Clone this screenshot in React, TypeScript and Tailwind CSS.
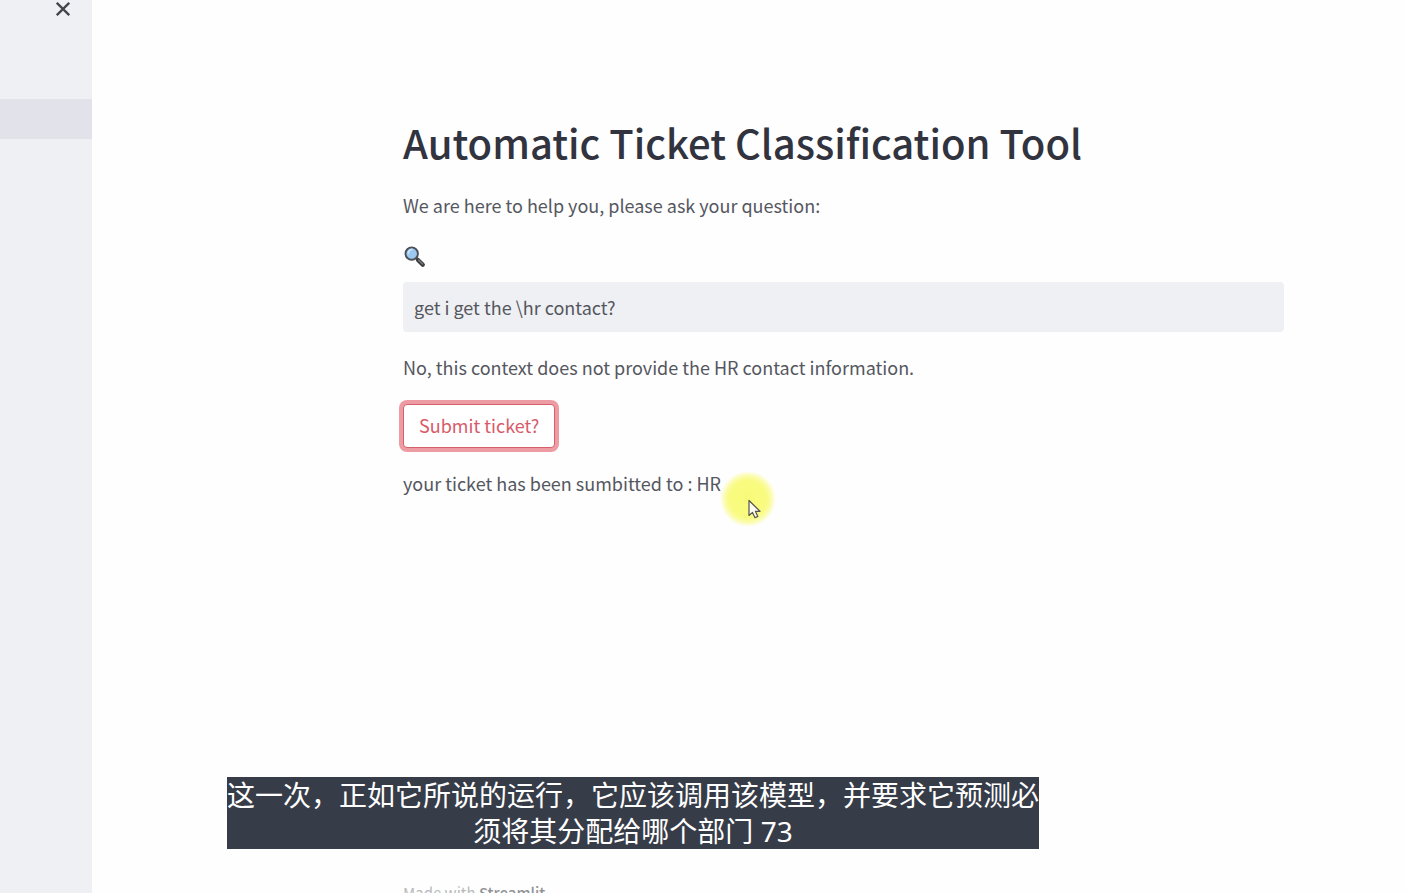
import { useState } from "react";

function MagnifierIcon() {
  return (
    <svg viewBox="0 0 24 24" className="size-6" aria-hidden="true">
      <path d="M13 13.7l2.4 2.4" stroke="#55585c" strokeWidth="2.4" />
      <path d="M15 15.9l4.8 4.8" stroke="#3a3c3e" strokeWidth="4.2" strokeLinecap="round" />
      <path d="M15.6 15.9l4 4" stroke="#7a7c7f" strokeWidth="1.4" strokeLinecap="round" />
      <circle cx="8.7" cy="9.6" r="6.2" fill="#9dc9f0" stroke="#4b5056" strokeWidth="1.9" />
      <path d="M5.4 9.3a3.8 3.8 0 0 1 3.4-3.7" fill="none" stroke="#cfe6fa" strokeWidth="1.5" strokeLinecap="round" />
    </svg>
  );
}

function CloseIcon() {
  return (
    <svg viewBox="0 0 14 14" className="size-3.5" aria-hidden="true">
      <path d="M0.8 0.8l12.4 12.4M13.2 0.8L0.8 13.2" stroke="#43454d" strokeWidth="2.3" />
    </svg>
  );
}

function Pointer() {
  return (
    <div className="pointer-events-none absolute left-[720px] top-[471px] size-14" aria-hidden="true">
      <div className="size-full rounded-full bg-[radial-gradient(closest-side,#f8fb78_0%,#f8fb80_66%,#fbfca8_82%,transparent_100%)]" />
      <svg viewBox="0 0 14 20" className="absolute left-7 top-7 h-5 w-3.5">
        <path
          d="M1 1.5V16.5L4.5 13.4L7 18.7L9.8 17.4L7.4 12.3H12Z"
          fill="#fbfbf4"
          stroke="#55554c"
          strokeWidth="1.2"
          strokeLinejoin="round"
        />
      </svg>
    </div>
  );
}

export default function App() {
  const [question, setQuestion] = useState("get i get the \\hr contact?");

  return (
    <div className="relative flex h-screen overflow-hidden bg-[#fefefe] font-['Noto_Sans_CJK_SC',sans-serif] text-[18px] leading-7 text-[#55575e]">
      <aside className="w-[92px] shrink-0 bg-[#eff0f4]">
        <div className="flex h-[99px] items-start justify-end pr-[22px] pt-0.5">
          <button type="button" aria-label="Close sidebar">
            <CloseIcon />
          </button>
        </div>
        <div className="h-10 bg-[#e1e2ea]" />
      </aside>

      <main className="min-w-0 flex-1 pl-[311px] pr-[123px] pt-[116px]">
        <h1 className="text-[40px] font-medium leading-[52px] text-[#31333f]">
          Automatic Ticket Classification Tool
        </h1>
        <p className="mt-[23px]">We are here to help you, please ask your question:</p>
        <label htmlFor="question" aria-label="Question" className="mt-[25px] block w-6">
          <MagnifierIcon />
        </label>
        <input
          id="question"
          type="text"
          value={question}
          onChange={(event) => setQuestion(event.target.value)}
          className="mt-3.5 block h-[50px] w-full rounded bg-[#eff0f4] px-[11px] pb-px outline-none"
        />
        <p className="mt-[21px]">No, this context does not provide the HR contact information.</p>
        <button
          type="button"
          className="mt-[23px] block h-11 rounded border border-[#d4606c] bg-white px-[15px] pb-0.5 text-[#d85b6a] ring-4 ring-[#ee9ca4]"
        >
          Submit ticket?
        </button>
        <p className="mt-[21px]">your ticket has been sumbitted to : HR</p>
        <footer className="mt-[382px] text-[15px] text-[#b9babd]">
          Made with{" "}
          <a href="#streamlit" className="font-medium text-[#929398]">
            Streamlit
          </a>
        </footer>
      </main>

      <Pointer />

      <div className="absolute bottom-11 left-[227px] whitespace-nowrap bg-[#373c49] text-center font-['Noto_Sans','Noto_Sans_CJK_SC',sans-serif] text-[28px] leading-9 text-white">
        这一次，正如它所说的运行，它应该调用该模型，并要求它预测必
        <br />
        须将其分配给哪个部门 73
      </div>
    </div>
  );
}
